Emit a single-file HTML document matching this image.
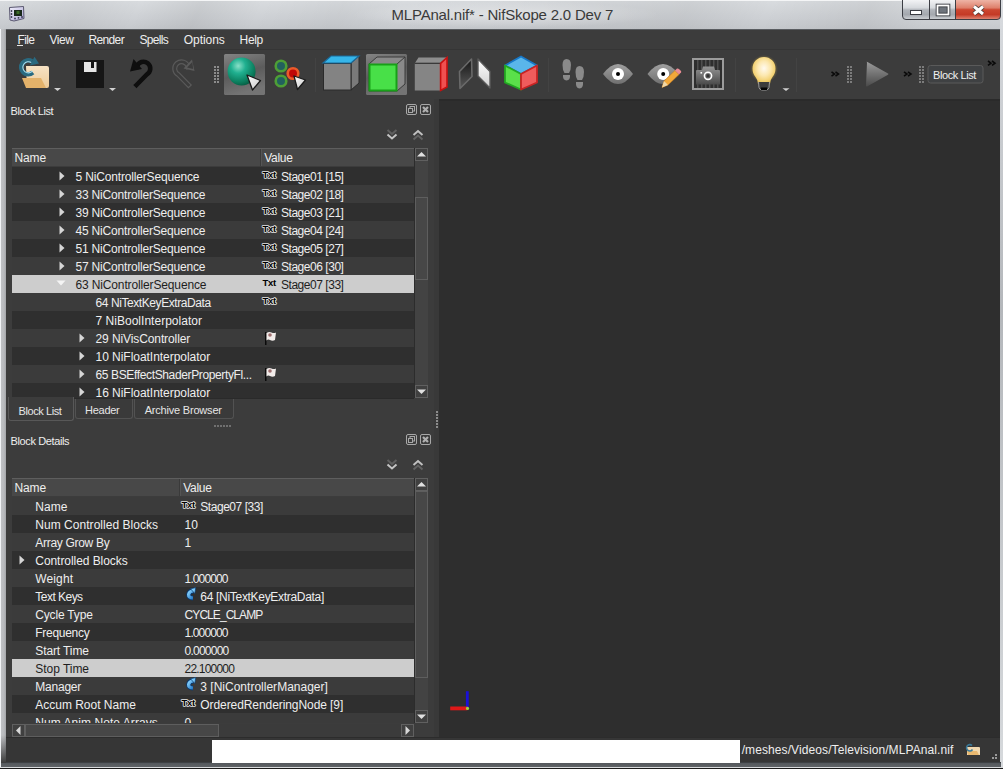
<!DOCTYPE html>
<html><head><meta charset="utf-8"><style>
*{margin:0;padding:0;box-sizing:border-box}
html,body{width:1003px;height:769px;overflow:hidden}
body{position:relative;background:#a9adb2;font-family:"Liberation Sans",sans-serif;font-size:12px;color:#e8e8e8}
.a{position:absolute}
.t{position:absolute;white-space:nowrap}
svg{position:absolute;overflow:visible}
</style></head><body>
<div class="a" style="left:0px;top:0px;width:1003px;height:769px;background:linear-gradient(90deg,#f2f4f6 0,#f2f4f6 1px,transparent 1px)"></div>
<div class="a" style="left:1px;top:0px;width:6px;height:769px;background:linear-gradient(90deg,#bfc1c4 0,#b8babd 3px,#a2a4a7 5px,#6a6c6e 6px)"></div>
<div class="a" style="left:1px;top:735px;width:6px;height:28px;background:linear-gradient(rgba(60,60,60,0),rgba(60,60,60,1))"></div>
<div class="a" style="left:0px;top:0px;width:1003px;height:29px;background:linear-gradient(#f4f5f6 0,#f4f5f6 1px,#d8dbde 1px,#cfd2d6 55%,#c6c9cd)"></div>
<div class="a" style="left:1000px;top:0px;width:3px;height:769px;background:linear-gradient(#d9dce0,#b4b7bb 40%,#d6d9dc)"></div>
<div class="a" style="left:0px;top:1px;width:1003px;height:28px;background:linear-gradient(115deg,rgba(0,0,0,0) 0,rgba(0,0,0,.04) 8%,rgba(0,0,0,0) 14%,rgba(0,0,0,.06) 20%,rgba(0,0,0,0) 26%,rgba(0,0,0,.03) 34%,rgba(0,0,0,0) 40%,rgba(0,0,0,.05) 68%,rgba(0,0,0,0) 76%,rgba(0,0,0,.05) 86%,rgba(0,0,0,0) 92%)"></div>
<div class="a" style="left:350px;top:1px;width:310px;height:27px;background:radial-gradient(closest-side,rgba(255,255,255,.4),rgba(255,255,255,0))"></div>
<div class="t" style="left:391.50px;top:7.30px;font-size:15px;line-height:15px;letter-spacing:-0.200px;color:#3a3a3a;">MLPAnal.nif* - NifSkope 2.0 Dev 7</div>
<svg style="left:8px;top:5px" width="20" height="20"><defs><linearGradient id="ic" x1="0" y1="0" x2="1" y2="1"><stop offset="0" stop-color="#f4f2ff"/><stop offset="1" stop-color="#a8a4d0"/></linearGradient></defs>
<path d="M1.5 2.5 L15.5 1.5 L16 13.5 L6 16 L2 15Z" fill="url(#ic)" stroke="#5a5870" stroke-width="1"/>
<rect x="6" y="5" width="8" height="6" fill="#1a2a1a"/><rect x="8.5" y="6" width="3" height="3" fill="#3a6a2a"/>
<g fill="#3a3850"><circle cx="3.5" cy="6" r="0.9"/><circle cx="3.5" cy="9" r="0.9"/><circle cx="3.5" cy="12" r="0.9"/><circle cx="7" cy="13.5" r="0.9"/><circle cx="10.5" cy="12.8" r="0.9"/><circle cx="14" cy="12" r="0.9"/></g></svg>
<svg style="left:902px;top:0" width="99" height="21"><defs>
<linearGradient id="cb" x1="0" y1="0" x2="0" y2="1"><stop offset="0" stop-color="#f2f3f5"/><stop offset="0.4" stop-color="#d6d9dd"/><stop offset="0.5" stop-color="#b2b6bc"/><stop offset="0.75" stop-color="#a4a8ae"/><stop offset="1" stop-color="#cfd2d6"/></linearGradient>
<linearGradient id="cr" x1="0" y1="0" x2="0" y2="1"><stop offset="0" stop-color="#eeb4a6"/><stop offset="0.4" stop-color="#de806c"/><stop offset="0.5" stop-color="#cc4630"/><stop offset="0.75" stop-color="#c43a26"/><stop offset="1" stop-color="#e28a78"/></linearGradient></defs>
<path d="M0.5 0 L0.5 16 Q0.5 19.5 4 19.5 L27.5 19.5 L27.5 0Z" fill="url(#cb)"/>
<rect x="27.5" y="0" width="26" height="19.5" fill="url(#cb)"/>
<path d="M53.5 0 L53.5 19.5 L95 19.5 Q98.5 19.5 98.5 16 L98.5 0Z" fill="url(#cr)"/>
<path d="M0.5 0 L0.5 16 Q0.5 19.5 4 19.5 L95 19.5 Q98.5 19.5 98.5 16 L98.5 0" fill="none" stroke="#3c3e44" stroke-width="1"/>
<path d="M27.5 0 L27.5 19.5 M53.5 0 L53.5 19.5" stroke="#3c3e44" stroke-width="1"/>
<rect x="8.5" y="10.5" width="11" height="4" fill="#fff" stroke="#3a3c42" stroke-width="1"/>
<rect x="35.5" y="5.5" width="11" height="9" fill="#6e747c" stroke="#3a3c42" stroke-width="3.6"/>
<rect x="35.5" y="5.5" width="11" height="9" fill="none" stroke="#fff" stroke-width="1.8"/>
<path d="M72 6.5 L81 14 M81 6.5 L72 14" stroke="#4a3a38" stroke-width="4.8"/>
<path d="M72 6.5 L81 14 M81 6.5 L72 14" stroke="#fff" stroke-width="3"/>
</svg>
<div class="a" style="left:6px;top:29px;width:994px;height:734px;background:#3c3c3c"></div>
<div class="a" style="left:6px;top:29px;width:994px;height:1px;background:#5a5d61"></div>
<div class="a" style="left:6px;top:762px;width:995px;height:1px;background:#3e4144"></div>
<div class="a" style="left:1px;top:763px;width:1000px;height:4px;background:linear-gradient(#55595d,#5f6367)"></div>
<div class="a" style="left:0px;top:767px;width:1003px;height:1px;background:#d8dadc"></div>
<div class="a" style="left:0px;top:768px;width:1003px;height:1px;background:#1c1c1c"></div>
<div class="t" style="left:17.50px;top:33.64px;font-size:12px;line-height:12px;letter-spacing:-0.633px;color:#eeeeee;">File</div>
<div class="t" style="left:49.50px;top:33.64px;font-size:12px;line-height:12px;letter-spacing:-0.500px;color:#eeeeee;">View</div>
<div class="t" style="left:88.40px;top:33.64px;font-size:12px;line-height:12px;letter-spacing:-0.620px;color:#eeeeee;">Render</div>
<div class="t" style="left:139.50px;top:33.64px;font-size:12px;line-height:12px;letter-spacing:-0.680px;color:#eeeeee;">Spells</div>
<div class="t" style="left:183.70px;top:33.64px;font-size:12px;line-height:12px;letter-spacing:-0.033px;color:#eeeeee;">Options</div>
<div class="t" style="left:239.60px;top:33.64px;font-size:12px;line-height:12px;letter-spacing:-0.333px;color:#eeeeee;">Help</div>
<div class="a" style="left:17px;top:45px;width:6px;height:1px;background:#e6e6e6"></div>
<div class="a" style="left:6px;top:49px;width:994px;height:1px;background:#353535"></div>
<div class="a" style="left:434px;top:99px;width:5px;height:638px;background:#393939"></div>
<div class="a" style="left:439px;top:99px;width:561px;height:638px;background:#2e2e2e"></div>
<div class="a" style="left:439px;top:99px;width:561px;height:2px;background:#2a2a2a"></div>
<svg style="left:449px;top:689px" width="24" height="24"><path d="M18.3 2.2 L18.3 19" stroke="#1a10d8" stroke-width="2.8"/><path d="M1.2 19.4 L18.3 19.4" stroke="#e01818" stroke-width="3.8"/><circle cx="18.5" cy="19.4" r="1.6" fill="#a0d040"/></svg>
<div class="a" style="left:6px;top:737px;width:994px;height:25px;background:#363636"></div>
<div class="a" style="left:6px;top:737px;width:994px;height:1px;background:#2c2c2c"></div>
<div class="a" style="left:212px;top:740px;width:528px;height:23px;background:#ffffff"></div>
<svg style="left:964px;top:741px" width="18" height="16"><path d="M3 6 L15 6 Q16 6 16 7 L16 14 L3 14Z" fill="#f0d8b0"/><path d="M3 10 L13 10 L15 14 L4 14Z" fill="#e8b870"/><path d="M8 4.5 A3.2 3.2 0 1 0 8.5 8.5" fill="none" stroke="#3a7a9a" stroke-width="1.6"/></svg>
<svg style="left:989px;top:754px" width="10" height="9"><g fill="#9a9a9a"><rect x="6" y="0" width="2" height="2"/><rect x="3" y="3" width="2" height="2"/><rect x="6" y="3" width="2" height="2"/></g></svg>
<div class="t" style="left:741.70px;top:744.24px;font-size:12px;line-height:12px;letter-spacing:0.092px;color:#eeeeee;">/meshes/Videos/Television/MLPAnal.nif</div>
<svg style="left:0;top:0" width="1003" height="100" viewBox="0 0 1003 100">
<defs>
<radialGradient id="sph" cx="0.38" cy="0.3" r="0.75"><stop offset="0" stop-color="#8ae0c8"/><stop offset="0.35" stop-color="#20b090"/><stop offset="0.8" stop-color="#0a7a5a"/><stop offset="1" stop-color="#06583f"/></radialGradient>
<linearGradient id="press" x1="0" y1="0" x2="0.3" y2="1"><stop offset="0" stop-color="#848484"/><stop offset="0.55" stop-color="#5c5c5c"/><stop offset="1" stop-color="#747474"/></linearGradient>
<linearGradient id="wtri" x1="0" y1="0" x2="1" y2="1"><stop offset="0" stop-color="#ffffff"/><stop offset="1" stop-color="#c8c8c8"/></linearGradient>
<linearGradient id="darkpl" x1="0" y1="0" x2="0" y2="1"><stop offset="0" stop-color="#151515"/><stop offset="1" stop-color="#5a5a5a"/></linearGradient>
<linearGradient id="whpl" x1="0" y1="0" x2="0" y2="1"><stop offset="0" stop-color="#ffffff"/><stop offset="1" stop-color="#d0d0d0"/></linearGradient>
<linearGradient id="eyeg" x1="0" y1="0" x2="0" y2="1"><stop offset="0" stop-color="#a0a0a0"/><stop offset="1" stop-color="#707070"/></linearGradient>
<linearGradient id="cam" x1="0" y1="0" x2="0" y2="1"><stop offset="0" stop-color="#959595"/><stop offset="1" stop-color="#4a4a4a"/></linearGradient>
<radialGradient id="bulb" cx="0.5" cy="0.42" r="0.6"><stop offset="0" stop-color="#fffaf0"/><stop offset="0.45" stop-color="#fce8b0"/><stop offset="0.8" stop-color="#f2d070"/><stop offset="1" stop-color="#e0b84a"/></radialGradient>
<radialGradient id="glow" cx="0.5" cy="0.5" r="0.5"><stop offset="0.6" stop-color="#e8c040" stop-opacity="0.5"/><stop offset="1" stop-color="#e8c040" stop-opacity="0"/></radialGradient>
<linearGradient id="play" x1="0" y1="0" x2="0" y2="1"><stop offset="0" stop-color="#9a9a9a"/><stop offset="1" stop-color="#4a4a4a"/></linearGradient>
<linearGradient id="folderb" x1="0" y1="0" x2="0" y2="1"><stop offset="0" stop-color="#f6e2c4"/><stop offset="1" stop-color="#eecb98"/></linearGradient>
</defs>
<path d="M26 66 L47 66 Q49 66 49 68 L49 86 Q49 88 47 88 L27 88Z" fill="url(#folderb)"/>
<path d="M22 78 L41 78 L46 88 L26 88Z" fill="#e4b26a"/>
<path d="M32.8 72.6 A7 7 0 1 1 32 61.4" fill="none" stroke="#2a6a80" stroke-width="4.6"/>
<path d="M32.5 71.2 A5.6 5.6 0 1 1 31.5 62.6" fill="none" stroke="#a8dcec" stroke-width="1.1"/>
<path d="M34.5 56.8 L39 63.5 L29.8 65.5Z" fill="#2a6a80"/>
<path d="M54 88 L61 88 L57.5 91Z" fill="#d0d0d0"/>
<rect x="76" y="60" width="28" height="28" fill="#161616"/>
<rect x="84" y="62" width="12.5" height="10" fill="#e6e6e6"/>
<rect x="91" y="62" width="3" height="6" fill="#161616"/>
<path d="M109 88 L116 88 L112.5 91Z" fill="#d0d0d0"/>
<path d="M136.5 85 L146.8 74.5 A6.8 6.8 0 1 0 137 66.5" fill="none" stroke="#0e0e0e" stroke-width="4.6" stroke-linecap="square"/>
<path d="M133.5 59 L130 71.5 L142 69Z" fill="#0e0e0e"/>
<path d="M188.5 85 L178.2 74.5 A6.8 6.8 0 1 1 188 66.5" fill="none" stroke="#5a5a5a" stroke-width="5" stroke-linecap="square"/>
<path d="M188.5 85 L178.2 74.5 A6.8 6.8 0 1 1 188 66.5" fill="none" stroke="#3c3c3c" stroke-width="2.6" stroke-linecap="square"/>
<path d="M192 59.5 L194.5 71 L183.5 68.5Z" fill="#5a5a5a"/><path d="M192.3 62 L193.2 69 L187 67.5Z" fill="#3c3c3c"/>
<rect x="214" y="66" width="2" height="2" fill="#8c8c8c"/>
<rect x="217" y="66" width="2" height="2" fill="#8c8c8c"/>
<rect x="214" y="69" width="2" height="2" fill="#8c8c8c"/>
<rect x="217" y="69" width="2" height="2" fill="#8c8c8c"/>
<rect x="214" y="72" width="2" height="2" fill="#8c8c8c"/>
<rect x="217" y="72" width="2" height="2" fill="#8c8c8c"/>
<rect x="214" y="75" width="2" height="2" fill="#8c8c8c"/>
<rect x="217" y="75" width="2" height="2" fill="#8c8c8c"/>
<rect x="214" y="78" width="2" height="2" fill="#8c8c8c"/>
<rect x="217" y="78" width="2" height="2" fill="#8c8c8c"/>
<rect x="214" y="81" width="2" height="2" fill="#8c8c8c"/>
<rect x="217" y="81" width="2" height="2" fill="#8c8c8c"/>
<rect x="224" y="54" width="41" height="41" rx="1.5" fill="url(#press)"/>
<circle cx="241.6" cy="71.5" r="14" fill="url(#sph)"/>
<path d="M247 75 L260.5 80.5 L252.5 90Z" fill="url(#wtri)" stroke="#1a1a1a" stroke-width="1.3" stroke-linejoin="round"/>
<circle cx="281" cy="66" r="5.3" fill="#22605e" stroke="#4e9e36" stroke-width="2.6"/>
<circle cx="281" cy="81" r="5.3" fill="#22605e" stroke="#4e9e36" stroke-width="2.6"/>
<circle cx="293" cy="73.5" r="5.3" fill="#c00808" stroke="#ea5a2a" stroke-width="2.6"/>
<path d="M294 76 L305.5 80 L297.5 89.5Z" fill="url(#wtri)" stroke="#1a1a1a" stroke-width="1.3" stroke-linejoin="round"/>
<rect x="315" y="58" width="1" height="34" fill="#434343"/>
<path d="M351 63 L359 56 L359 83 L351 90Z" fill="#7a7a7a" stroke="#2a2a2a" stroke-width="1"/>
<rect x="323.5" y="63.5" width="27.5" height="26.5" fill="#838383" stroke="#2a2a2a" stroke-width="1"/>
<path d="M323 63 L331 56 L359 56 L351 63Z" fill="#36b6ea" stroke="#1a6a9a" stroke-width="1.2"/>
<rect x="366" y="54" width="41" height="41" rx="1.5" fill="url(#press)"/>
<path d="M369 64 L377 57 L405 57 L405 84 L397 91 L369 91Z" fill="#8a8a8a" stroke="#3a3a3a" stroke-width="1"/>
<path d="M397 64 L405 57" stroke="#3a3a3a" stroke-width="1"/>
<rect x="369.5" y="64.5" width="27" height="26" fill="#48e048" stroke="#18a018" stroke-width="2"/>
<path d="M414.8 63.3 L418.5 57.5 L447 57.5 L440.6 63.3Z" fill="#8e8e8e"/>
<rect x="414.8" y="63.3" width="25.8" height="27.2" fill="#858585"/>
<path d="M414.8 63.3 L440.6 63.3" stroke="#333" stroke-width="1.2"/>
<path d="M440.6 63.3 L447 57.5 L447 87 L440.6 90.5Z" fill="#f05050" stroke="#c81010" stroke-width="1.6"/>
<path d="M459.5 71.5 L471.5 59 L472 76.5 L460 88.5Z" fill="url(#darkpl)" stroke="#6a6a6a" stroke-width="1.6" stroke-linejoin="round"/>
<path d="M478 59 L490 71.5 L490 88 L478 76Z" fill="url(#whpl)" stroke="#5a5a5a" stroke-width="1.4" stroke-linejoin="round"/>
<path d="M521 56.5 L537 65.5 L521 74 L505 65.5Z" fill="#5ab6ea" stroke="#1878c8" stroke-width="1.8" stroke-linejoin="round"/>
<path d="M505 65.5 L521 74 L521 89.5 L505 82.5Z" fill="#5ae04a" stroke="#22a822" stroke-width="1.8" stroke-linejoin="round"/>
<path d="M537 65.5 L521 74 L521 89.5 L537 82.5Z" fill="#f05c5c" stroke="#c82424" stroke-width="1.8" stroke-linejoin="round"/>
<rect x="548" y="58" width="1" height="34" fill="#434343"/>
<g fill="#8a8a8a"><path d="M566.5 59 Q571 59 571 65 Q571 70 569 73 L564.5 73 Q562.5 70 562.5 65 Q562.5 59 566.5 59Z"/><path d="M563 75 L570 75 Q570.5 80 566.5 80.5 Q562.5 80 563 75Z"/><path d="M579.5 66 Q584 66 584 72 Q584 77 582 80 L577.5 80 Q575.5 77 575.5 72 Q575.5 66 579.5 66Z"/><path d="M576 82 L583 82 Q583.5 88 579.5 88.5 Q575.5 88 576 82Z"/></g>
<path d="M603 74 Q618 54 633 74 Q618 94 603 74Z" fill="url(#eyeg)"/>
<circle cx="618" cy="74" r="6" fill="#ffffff"/><circle cx="618" cy="74" r="2" fill="#000"/>
<path d="M647.5 74 Q663 54 678.5 74 Q663 94 647.5 74Z" fill="url(#eyeg)"/>
<circle cx="663.2" cy="74" r="6" fill="#ffffff"/><circle cx="663.2" cy="74" r="2" fill="#000"/>
<path d="M662 87.5 L664 81 L675 70.5 L679 74.5 L668 85Z" fill="#f2a83a" stroke="#c87a20" stroke-width="0.6"/>
<path d="M675 70.5 L677 68.5 Q678 68 679.5 69.5 L681 71 Q681.5 72 681 72.5 L679 74.5Z" fill="#ec8c94"/>
<path d="M662 87.5 L664 81 L668 85Z" fill="#f0d8a8"/>
<rect x="693" y="59" width="30" height="30" fill="#2e2e2e" stroke="#9c9c9c" stroke-width="2"/>
<rect x="697" y="60" width="1.5" height="28" fill="#4e4e4e"/>
<rect x="701" y="60" width="1.5" height="28" fill="#4e4e4e"/>
<rect x="705" y="60" width="1.5" height="28" fill="#4e4e4e"/>
<rect x="709" y="60" width="1.5" height="28" fill="#4e4e4e"/>
<rect x="713" y="60" width="1.5" height="28" fill="#4e4e4e"/>
<rect x="717" y="60" width="1.5" height="28" fill="#4e4e4e"/>
<path d="M696 71 Q696 70 697 70 L702 70 L703 66.5 L714 66.5 L715 70 L719 70 Q720 70 720 71 L720 84.5 L696 84.5Z" fill="url(#cam)"/>
<circle cx="708" cy="75.8" r="3.6" fill="none" stroke="#fff" stroke-width="1.6"/><rect x="706.5" y="74.3" width="3" height="3" fill="#333"/>
<rect x="700.5" y="72" width="1.6" height="1.6" fill="#fff"/>
<rect x="735" y="58" width="1" height="34" fill="#434343"/>
<circle cx="764" cy="69" r="14" fill="url(#glow)"/>
<path d="M758 84 Q758 80 755.5 77 Q752.5 73.5 752.5 68.5 A11.5 11.5 0 0 1 775.5 68.5 Q775.5 73.5 772.5 77 Q770 80 770 84Z" fill="url(#bulb)"/>
<path d="M758.5 82 L759 87.5 Q759.5 90 762 90 L766 90 Q768.5 90 769 87.5 L769.5 82" fill="#3c3c3c" stroke="#9a9a9a" stroke-width="1"/>
<rect x="761" y="87.5" width="6" height="2.5" fill="#050505"/>
<path d="M782.5 88.3 L789.5 88.3 L786 91Z" fill="#d0d0d0"/>
<rect x="796" y="58" width="1" height="34" fill="#434343"/>
<path d="M831.5 71.8 L834.5 74.0 L831.5 76.2 M835.5 71.8 L838.5 74.0 L835.5 76.2" fill="none" stroke="#0a0a0a" stroke-width="1.6"/>
<rect x="847" y="66" width="2" height="2" fill="#7c7c7c"/>
<rect x="850" y="66" width="2" height="2" fill="#7c7c7c"/>
<rect x="847" y="69" width="2" height="2" fill="#7c7c7c"/>
<rect x="850" y="69" width="2" height="2" fill="#7c7c7c"/>
<rect x="847" y="72" width="2" height="2" fill="#7c7c7c"/>
<rect x="850" y="72" width="2" height="2" fill="#7c7c7c"/>
<rect x="847" y="75" width="2" height="2" fill="#7c7c7c"/>
<rect x="850" y="75" width="2" height="2" fill="#7c7c7c"/>
<rect x="847" y="78" width="2" height="2" fill="#7c7c7c"/>
<rect x="850" y="78" width="2" height="2" fill="#7c7c7c"/>
<rect x="847" y="81" width="2" height="2" fill="#7c7c7c"/>
<rect x="850" y="81" width="2" height="2" fill="#7c7c7c"/>
<path d="M867 62.5 Q866 61.5 867.5 62 L888 73.5 Q889 74 888 74.8 L867.5 86.3 Q866 87 866 85.5Z" fill="url(#play)"/>
<path d="M904 71.8 L907 74.0 L904 76.2 M908 71.8 L911 74.0 L908 76.2" fill="none" stroke="#0a0a0a" stroke-width="1.6"/>
<rect x="919" y="66" width="2" height="2" fill="#7c7c7c"/>
<rect x="922" y="66" width="2" height="2" fill="#7c7c7c"/>
<rect x="919" y="69" width="2" height="2" fill="#7c7c7c"/>
<rect x="922" y="69" width="2" height="2" fill="#7c7c7c"/>
<rect x="919" y="72" width="2" height="2" fill="#7c7c7c"/>
<rect x="922" y="72" width="2" height="2" fill="#7c7c7c"/>
<rect x="919" y="75" width="2" height="2" fill="#7c7c7c"/>
<rect x="922" y="75" width="2" height="2" fill="#7c7c7c"/>
<rect x="919" y="78" width="2" height="2" fill="#7c7c7c"/>
<rect x="922" y="78" width="2" height="2" fill="#7c7c7c"/>
<rect x="919" y="81" width="2" height="2" fill="#7c7c7c"/>
<rect x="922" y="81" width="2" height="2" fill="#7c7c7c"/>
<rect x="928" y="65.5" width="55" height="17.5" rx="2.5" fill="#3f4143" stroke="#5a5a5a" stroke-width="1"/>
<path d="M988 61 L991 63.2 L988 65.4 M992 61 L995 63.2 L992 65.4" fill="none" stroke="#0a0a0a" stroke-width="1.6"/>
</svg>
<div class="t" style="left:933.00px;top:69.59px;font-size:11px;line-height:11px;letter-spacing:-0.411px;color:#f0f0f0;">Block List</div>
<div class="t" style="left:10.60px;top:105.59px;font-size:11px;line-height:11px;letter-spacing:-0.456px;color:#eeeeee;">Block List</div>
<div class="a" style="left:12px;top:148px;width:402px;height:18px;background:#484848"></div>
<div class="a" style="left:12px;top:148px;width:402px;height:1px;background:#5e5e5e"></div>
<div class="a" style="left:260px;top:149px;width:1px;height:17px;background:#3a3a3a"></div>
<div class="a" style="left:261px;top:149px;width:1px;height:17px;background:#555"></div>
<div class="t" style="left:14.50px;top:151.64px;font-size:12px;line-height:12px;letter-spacing:-0.133px;color:#eeeeee;">Name</div>
<div class="t" style="left:264.20px;top:151.64px;font-size:12px;line-height:12px;letter-spacing:-0.275px;color:#eeeeee;">Value</div>
<div class="a" style="left:12px;top:166.5px;width:402px;height:18.05px;background:#2f2f2f"></div>
<div class="a" style="left:12px;top:184.55px;width:402px;height:18.05px;background:#3b3b3b"></div>
<div class="a" style="left:12px;top:202.6px;width:402px;height:18.05px;background:#2f2f2f"></div>
<div class="a" style="left:12px;top:220.65px;width:402px;height:18.05px;background:#3b3b3b"></div>
<div class="a" style="left:12px;top:238.7px;width:402px;height:18.05px;background:#2f2f2f"></div>
<div class="a" style="left:12px;top:256.75px;width:402px;height:18.05px;background:#3b3b3b"></div>
<div class="a" style="left:12px;top:274.8px;width:402px;height:18.05px;background:#cdcdcd"></div>
<div class="a" style="left:12px;top:292.85px;width:402px;height:18.05px;background:#3b3b3b"></div>
<div class="a" style="left:12px;top:310.9px;width:402px;height:18.05px;background:#2f2f2f"></div>
<div class="a" style="left:12px;top:328.95px;width:402px;height:18.05px;background:#3b3b3b"></div>
<div class="a" style="left:12px;top:347.0px;width:402px;height:18.05px;background:#2f2f2f"></div>
<div class="a" style="left:12px;top:365.05px;width:402px;height:18.05px;background:#3b3b3b"></div>
<div class="a" style="left:12px;top:383.1px;width:402px;height:14.9px;background:#2f2f2f"></div>
<div class="a" style="left:12px;top:166px;width:402px;height:232px;overflow:hidden">
<div class="t" style="left:63.50px;top:5.44px;font-size:12px;line-height:12px;letter-spacing:-0.162px;color:#eeeeee;">5 NiControllerSequence</div>
<svg style="left:47.0px;top:4.6px" width="6" height="10"><path d="M0.5 0.5 L5.5 5 L0.5 9.5Z" fill="#d6d6d6"/></svg>
<svg style="left:249.60000000000002px;top:4px" width="16" height="10"><text x="0.5" y="8" font-family="Liberation Sans" font-weight="bold" font-size="9.5" letter-spacing="-0.3" fill="#000" stroke="#e8e8e8" stroke-width="1.6" paint-order="stroke" stroke-linejoin="round">Txt</text></svg>
<div class="t" style="left:269.00px;top:5.44px;font-size:12px;line-height:12px;letter-spacing:-0.464px;color:#eeeeee;">Stage01 [15]</div>
<div class="t" style="left:63.50px;top:23.44px;font-size:12px;line-height:12px;letter-spacing:-0.186px;color:#eeeeee;">33 NiControllerSequence</div>
<svg style="left:47.0px;top:22.6px" width="6" height="10"><path d="M0.5 0.5 L5.5 5 L0.5 9.5Z" fill="#d6d6d6"/></svg>
<svg style="left:249.60000000000002px;top:22px" width="16" height="10"><text x="0.5" y="8" font-family="Liberation Sans" font-weight="bold" font-size="9.5" letter-spacing="-0.3" fill="#000" stroke="#e8e8e8" stroke-width="1.6" paint-order="stroke" stroke-linejoin="round">Txt</text></svg>
<div class="t" style="left:269.00px;top:23.44px;font-size:12px;line-height:12px;letter-spacing:-0.464px;color:#eeeeee;">Stage02 [18]</div>
<div class="t" style="left:63.50px;top:41.44px;font-size:12px;line-height:12px;letter-spacing:-0.186px;color:#eeeeee;">39 NiControllerSequence</div>
<svg style="left:47.0px;top:40.6px" width="6" height="10"><path d="M0.5 0.5 L5.5 5 L0.5 9.5Z" fill="#d6d6d6"/></svg>
<svg style="left:249.60000000000002px;top:40px" width="16" height="10"><text x="0.5" y="8" font-family="Liberation Sans" font-weight="bold" font-size="9.5" letter-spacing="-0.3" fill="#000" stroke="#e8e8e8" stroke-width="1.6" paint-order="stroke" stroke-linejoin="round">Txt</text></svg>
<div class="t" style="left:269.00px;top:41.44px;font-size:12px;line-height:12px;letter-spacing:-0.464px;color:#eeeeee;">Stage03 [21]</div>
<div class="t" style="left:63.50px;top:59.44px;font-size:12px;line-height:12px;letter-spacing:-0.186px;color:#eeeeee;">45 NiControllerSequence</div>
<svg style="left:47.0px;top:58.6px" width="6" height="10"><path d="M0.5 0.5 L5.5 5 L0.5 9.5Z" fill="#d6d6d6"/></svg>
<svg style="left:249.60000000000002px;top:58px" width="16" height="10"><text x="0.5" y="8" font-family="Liberation Sans" font-weight="bold" font-size="9.5" letter-spacing="-0.3" fill="#000" stroke="#e8e8e8" stroke-width="1.6" paint-order="stroke" stroke-linejoin="round">Txt</text></svg>
<div class="t" style="left:269.00px;top:59.44px;font-size:12px;line-height:12px;letter-spacing:-0.464px;color:#eeeeee;">Stage04 [24]</div>
<div class="t" style="left:63.50px;top:77.44px;font-size:12px;line-height:12px;letter-spacing:-0.186px;color:#eeeeee;">51 NiControllerSequence</div>
<svg style="left:47.0px;top:76.6px" width="6" height="10"><path d="M0.5 0.5 L5.5 5 L0.5 9.5Z" fill="#d6d6d6"/></svg>
<svg style="left:249.60000000000002px;top:76px" width="16" height="10"><text x="0.5" y="8" font-family="Liberation Sans" font-weight="bold" font-size="9.5" letter-spacing="-0.3" fill="#000" stroke="#e8e8e8" stroke-width="1.6" paint-order="stroke" stroke-linejoin="round">Txt</text></svg>
<div class="t" style="left:269.00px;top:77.44px;font-size:12px;line-height:12px;letter-spacing:-0.464px;color:#eeeeee;">Stage05 [27]</div>
<div class="t" style="left:63.50px;top:95.44px;font-size:12px;line-height:12px;letter-spacing:-0.186px;color:#eeeeee;">57 NiControllerSequence</div>
<svg style="left:47.0px;top:94.6px" width="6" height="10"><path d="M0.5 0.5 L5.5 5 L0.5 9.5Z" fill="#d6d6d6"/></svg>
<svg style="left:249.60000000000002px;top:94px" width="16" height="10"><text x="0.5" y="8" font-family="Liberation Sans" font-weight="bold" font-size="9.5" letter-spacing="-0.3" fill="#000" stroke="#e8e8e8" stroke-width="1.6" paint-order="stroke" stroke-linejoin="round">Txt</text></svg>
<div class="t" style="left:269.00px;top:95.44px;font-size:12px;line-height:12px;letter-spacing:-0.464px;color:#eeeeee;">Stage06 [30]</div>
<div class="t" style="left:63.50px;top:113.44px;font-size:12px;line-height:12px;letter-spacing:-0.141px;color:#1e1e1e;">63 NiControllerSequence</div>
<svg style="left:43.8px;top:114px" width="10" height="6"><path d="M0.5 0.5 L9.5 0.5 L5 5.5Z" fill="#f4f4f4"/></svg>
<svg style="left:249.60000000000002px;top:112px" width="16" height="10"><text x="0.5" y="8" font-family="Liberation Sans" font-weight="bold" font-size="9.5" letter-spacing="-0.3" fill="#000">Txt</text></svg>
<div class="t" style="left:269.00px;top:113.44px;font-size:12px;line-height:12px;letter-spacing:-0.464px;color:#1e1e1e;">Stage07 [33]</div>
<div class="t" style="left:83.50px;top:131.44px;font-size:12px;line-height:12px;letter-spacing:-0.420px;color:#eeeeee;">64 NiTextKeyExtraData</div>
<svg style="left:249.60000000000002px;top:130px" width="16" height="10"><text x="0.5" y="8" font-family="Liberation Sans" font-weight="bold" font-size="9.5" letter-spacing="-0.3" fill="#000" stroke="#e8e8e8" stroke-width="1.6" paint-order="stroke" stroke-linejoin="round">Txt</text></svg>
<div class="t" style="left:83.50px;top:149.44px;font-size:12px;line-height:12px;letter-spacing:0.021px;color:#eeeeee;">7 NiBoolInterpolator</div>
<div class="t" style="left:83.50px;top:167.44px;font-size:12px;line-height:12px;letter-spacing:-0.100px;color:#eeeeee;">29 NiVisController</div>
<svg style="left:67.0px;top:166.6px" width="6" height="10"><path d="M0.5 0.5 L5.5 5 L0.5 9.5Z" fill="#d6d6d6"/></svg>
<svg style="left:252.10000000000002px;top:164.5px" width="14" height="15"><path d="M1 1 L2.5 1 L2.5 14 L1 14Z" fill="#0a0a0a"/><path d="M2.5 2 Q5 0.5 7.5 1.5 Q10 2.5 12 1.5 L11 9 Q8.5 10.5 6 9 Q4 8 2.5 9.5Z" fill="#f2ecea"/><circle cx="6" cy="4" r="1.8" fill="#8a5050" opacity="0.8"/></svg>
<div class="t" style="left:83.50px;top:185.44px;font-size:12px;line-height:12px;letter-spacing:-0.033px;color:#eeeeee;">10 NiFloatInterpolator</div>
<svg style="left:67.0px;top:184.6px" width="6" height="10"><path d="M0.5 0.5 L5.5 5 L0.5 9.5Z" fill="#d6d6d6"/></svg>
<div class="t" style="left:83.50px;top:203.44px;font-size:12px;line-height:12px;letter-spacing:-0.366px;color:#eeeeee;">65 BSEffectShaderPropertyFl...</div>
<svg style="left:67.0px;top:202.6px" width="6" height="10"><path d="M0.5 0.5 L5.5 5 L0.5 9.5Z" fill="#d6d6d6"/></svg>
<svg style="left:252.10000000000002px;top:200.5px" width="14" height="15"><path d="M1 1 L2.5 1 L2.5 14 L1 14Z" fill="#0a0a0a"/><path d="M2.5 2 Q5 0.5 7.5 1.5 Q10 2.5 12 1.5 L11 9 Q8.5 10.5 6 9 Q4 8 2.5 9.5Z" fill="#f2ecea"/><circle cx="6" cy="4" r="1.8" fill="#8a5050" opacity="0.8"/></svg>
<div class="t" style="left:83.50px;top:221.44px;font-size:12px;line-height:12px;letter-spacing:-0.033px;color:#eeeeee;">16 NiFloatInterpolator</div>
<svg style="left:67.0px;top:220.6px" width="6" height="10"><path d="M0.5 0.5 L5.5 5 L0.5 9.5Z" fill="#d6d6d6"/></svg>
</div>
<div class="a" style="left:414px;top:148px;width:1px;height:250px;background:#2c2c2c"></div>
<div class="a" style="left:415px;top:148px;width:13px;height:250px;background:#434343"></div>
<div class="a" style="left:415px;top:197px;width:13px;height:83px;background:#474747;border:1px solid #5e5e5e"></div>
<div class="a" style="left:415px;top:148px;width:13px;height:13px;background:#404040;border:1px solid #606060"></div>
<svg style="left:417px;top:152px" width="9" height="5"><path d="M0 4.5 L4.5 0 L9 4.5Z" fill="#e0e0e0"/></svg>
<div class="a" style="left:415px;top:385px;width:13px;height:13px;background:#404040;border:1px solid #606060"></div>
<svg style="left:417px;top:389px" width="9" height="5"><path d="M0 0.5 L4.5 5 L9 0.5Z" fill="#e0e0e0"/></svg>
<div class="a" style="left:12px;top:398px;width:402px;height:1px;background:#2a2a2a"></div>
<div class="a" style="left:75px;top:399px;width:58px;height:20px;background:#3a3a3a;border:1px solid #525252;border-top:none;border-radius:0 0 3px 3px"></div>
<div class="t" style="left:85.00px;top:404.79px;font-size:11px;line-height:11px;letter-spacing:-0.260px;color:#e6e6e6;">Header</div>
<div class="a" style="left:134px;top:399px;width:100px;height:20px;background:#3a3a3a;border:1px solid #525252;border-top:none;border-radius:0 0 3px 3px"></div>
<div class="t" style="left:144.70px;top:404.79px;font-size:11px;line-height:11px;letter-spacing:-0.200px;color:#e6e6e6;">Archive Browser</div>
<div class="a" style="left:8px;top:397px;width:66px;height:24px;background:#3c3c3c;border:1px solid #585858;border-top:none;border-radius:0 0 3px 3px"></div>
<div class="t" style="left:18.60px;top:405.59px;font-size:11px;line-height:11px;letter-spacing:-0.433px;color:#e6e6e6;">Block List</div>
<div class="a" style="left:214px;top:425px;width:2px;height:2px;background:#707070"></div>
<div class="a" style="left:217px;top:425px;width:2px;height:2px;background:#707070"></div>
<div class="a" style="left:220px;top:425px;width:2px;height:2px;background:#707070"></div>
<div class="a" style="left:223px;top:425px;width:2px;height:2px;background:#707070"></div>
<div class="a" style="left:226px;top:425px;width:2px;height:2px;background:#707070"></div>
<div class="a" style="left:229px;top:425px;width:2px;height:2px;background:#707070"></div>
<div class="a" style="left:436px;top:411px;width:2px;height:2px;background:#8c8c8c"></div>
<div class="a" style="left:436px;top:414px;width:2px;height:2px;background:#8c8c8c"></div>
<div class="a" style="left:436px;top:417px;width:2px;height:2px;background:#8c8c8c"></div>
<div class="a" style="left:436px;top:420px;width:2px;height:2px;background:#8c8c8c"></div>
<div class="a" style="left:436px;top:423px;width:2px;height:2px;background:#8c8c8c"></div>
<div class="a" style="left:436px;top:426px;width:2px;height:2px;background:#8c8c8c"></div>
<svg style="left:406px;top:104px" width="11" height="11"><rect x="0.5" y="0.5" width="10" height="10" rx="1.5" fill="none" stroke="#a8a8a8"/><rect x="4" y="2.5" width="4.5" height="4.5" fill="none" stroke="#a8a8a8"/><rect x="2.5" y="4.5" width="4" height="4" fill="#3c3c3c" stroke="#a8a8a8"/></svg>
<svg style="left:420px;top:104px" width="11" height="11"><rect x="0.5" y="0.5" width="10" height="10" rx="1.5" fill="none" stroke="#a8a8a8"/><path d="M3 3 L8 8 M8 3 L3 8" stroke="#b0b0b0" stroke-width="2.2"/></svg>
<svg style="left:386px;top:129px" width="12" height="12"><path d="M1.5 1 L6 5 L10.5 1" fill="none" stroke="#5e5e5e" stroke-width="2"/><path d="M1.5 5.5 L6 9.5 L10.5 5.5" fill="none" stroke="#c4c4c4" stroke-width="2"/></svg>
<svg style="left:412px;top:129px" width="12" height="12"><path d="M1.5 6 L6 2 L10.5 6" fill="none" stroke="#c0c0c0" stroke-width="2"/><path d="M1.5 10.5 L6 6.5 L10.5 10.5" fill="none" stroke="#626262" stroke-width="2"/></svg>
<div class="t" style="left:10.60px;top:435.59px;font-size:11px;line-height:11px;letter-spacing:-0.383px;color:#eeeeee;">Block Details</div>
<div class="a" style="left:12px;top:478px;width:402px;height:18px;background:#484848"></div>
<div class="a" style="left:12px;top:478px;width:402px;height:1px;background:#5e5e5e"></div>
<div class="a" style="left:179px;top:479px;width:1px;height:17px;background:#3a3a3a"></div>
<div class="a" style="left:180px;top:479px;width:1px;height:17px;background:#555"></div>
<div class="t" style="left:14.50px;top:481.64px;font-size:12px;line-height:12px;letter-spacing:-0.133px;color:#eeeeee;">Name</div>
<div class="t" style="left:183.20px;top:481.64px;font-size:12px;line-height:12px;letter-spacing:-0.275px;color:#eeeeee;">Value</div>
<div class="a" style="left:12px;top:496.5px;width:402px;height:18.05px;background:#3b3b3b"></div>
<div class="a" style="left:12px;top:514.55px;width:402px;height:18.05px;background:#2f2f2f"></div>
<div class="a" style="left:12px;top:532.6px;width:402px;height:18.05px;background:#3b3b3b"></div>
<div class="a" style="left:12px;top:550.65px;width:402px;height:18.05px;background:#2f2f2f"></div>
<div class="a" style="left:12px;top:568.7px;width:402px;height:18.05px;background:#3b3b3b"></div>
<div class="a" style="left:12px;top:586.75px;width:402px;height:18.05px;background:#2f2f2f"></div>
<div class="a" style="left:12px;top:604.8px;width:402px;height:18.05px;background:#3b3b3b"></div>
<div class="a" style="left:12px;top:622.85px;width:402px;height:18.05px;background:#2f2f2f"></div>
<div class="a" style="left:12px;top:640.9px;width:402px;height:18.05px;background:#3b3b3b"></div>
<div class="a" style="left:12px;top:658.95px;width:402px;height:18.05px;background:#cdcdcd"></div>
<div class="a" style="left:12px;top:677.0px;width:402px;height:18.05px;background:#3b3b3b"></div>
<div class="a" style="left:12px;top:695.05px;width:402px;height:18.05px;background:#2f2f2f"></div>
<div class="a" style="left:12px;top:713.1px;width:402px;height:9.9px;background:#3b3b3b"></div>
<div class="a" style="left:12px;top:496px;width:402px;height:227px;overflow:hidden">
<div class="t" style="left:23.30px;top:5.44px;font-size:12px;line-height:12px;letter-spacing:0.033px;color:#eeeeee;">Name</div>
<svg style="left:169px;top:4px" width="16" height="10"><text x="0.5" y="8" font-family="Liberation Sans" font-weight="bold" font-size="9.5" letter-spacing="-0.3" fill="#000" stroke="#e8e8e8" stroke-width="1.6" paint-order="stroke" stroke-linejoin="round">Txt</text></svg>
<div class="t" style="left:188.30px;top:5.44px;font-size:12px;line-height:12px;letter-spacing:-0.464px;color:#eeeeee;">Stage07 [33]</div>
<div class="t" style="left:23.30px;top:23.44px;font-size:12px;line-height:12px;letter-spacing:0.035px;color:#eeeeee;">Num Controlled Blocks</div>
<div class="t" style="left:172.60px;top:23.44px;font-size:12px;line-height:12px;color:#eeeeee;">10</div>
<div class="t" style="left:23.30px;top:41.44px;font-size:12px;line-height:12px;letter-spacing:-0.300px;color:#eeeeee;">Array Grow By</div>
<div class="t" style="left:172.60px;top:41.44px;font-size:12px;line-height:12px;color:#eeeeee;">1</div>
<div class="t" style="left:23.30px;top:59.44px;font-size:12px;line-height:12px;letter-spacing:-0.062px;color:#eeeeee;">Controlled Blocks</div>
<svg style="left:6.8px;top:58.6px" width="6" height="10"><path d="M0.5 0.5 L5.5 5 L0.5 9.5Z" fill="#d6d6d6"/></svg>
<div class="t" style="left:23.30px;top:77.44px;font-size:12px;line-height:12px;letter-spacing:0.120px;color:#eeeeee;">Weight</div>
<div class="t" style="left:172.60px;top:77.44px;font-size:12px;line-height:12px;letter-spacing:-0.886px;color:#eeeeee;">1.000000</div>
<div class="t" style="left:23.30px;top:95.44px;font-size:12px;line-height:12px;letter-spacing:-0.525px;color:#eeeeee;">Text Keys</div>
<svg style="left:173.5px;top:91px" width="10" height="13"><defs><linearGradient id="lk3305" x1="0" y1="0" x2="1" y2="1"><stop offset="0" stop-color="#8ad4ff"/><stop offset="1" stop-color="#1e74c4"/></linearGradient></defs><path d="M7.5 4 Q3.2 4 2.6 7.5 Q2.4 10.8 7 11" fill="none" stroke="#0a3a70" stroke-width="4.8"/><path d="M7.5 4 Q3.2 4 2.6 7.5 Q2.4 10.8 7 11" fill="none" stroke="url(#lk3305)" stroke-width="3.2"/><path d="M4.5 1.8 L9.8 0.6 L8.8 6.5Z" fill="#7ac8f8" stroke="#0a3a70" stroke-width="0.7"/></svg>
<div class="t" style="left:188.30px;top:95.44px;font-size:12px;line-height:12px;letter-spacing:-0.305px;color:#eeeeee;">64 [NiTextKeyExtraData]</div>
<div class="t" style="left:23.30px;top:113.44px;font-size:12px;line-height:12px;letter-spacing:-0.178px;color:#eeeeee;">Cycle Type</div>
<div class="t" style="left:172.60px;top:113.44px;font-size:12px;line-height:12px;letter-spacing:-0.940px;color:#eeeeee;">CYCLE_CLAMP</div>
<div class="t" style="left:23.30px;top:131.44px;font-size:12px;line-height:12px;letter-spacing:-0.288px;color:#eeeeee;">Frequency</div>
<div class="t" style="left:172.60px;top:131.44px;font-size:12px;line-height:12px;letter-spacing:-0.886px;color:#eeeeee;">1.000000</div>
<div class="t" style="left:23.30px;top:149.44px;font-size:12px;line-height:12px;letter-spacing:-0.111px;color:#eeeeee;">Start Time</div>
<div class="t" style="left:172.60px;top:149.44px;font-size:12px;line-height:12px;letter-spacing:-0.771px;color:#eeeeee;">0.000000</div>
<div class="t" style="left:23.30px;top:167.44px;font-size:12px;line-height:12px;letter-spacing:-0.037px;color:#1e1e1e;">Stop Time</div>
<div class="t" style="left:172.60px;top:167.44px;font-size:12px;line-height:12px;letter-spacing:-0.812px;color:#1e1e1e;">22.100000</div>
<div class="t" style="left:23.30px;top:185.44px;font-size:12px;line-height:12px;letter-spacing:-0.233px;color:#eeeeee;">Manager</div>
<svg style="left:173.5px;top:181px" width="10" height="13"><defs><linearGradient id="lk33010" x1="0" y1="0" x2="1" y2="1"><stop offset="0" stop-color="#8ad4ff"/><stop offset="1" stop-color="#1e74c4"/></linearGradient></defs><path d="M7.5 4 Q3.2 4 2.6 7.5 Q2.4 10.8 7 11" fill="none" stroke="#0a3a70" stroke-width="4.8"/><path d="M7.5 4 Q3.2 4 2.6 7.5 Q2.4 10.8 7 11" fill="none" stroke="url(#lk33010)" stroke-width="3.2"/><path d="M4.5 1.8 L9.8 0.6 L8.8 6.5Z" fill="#7ac8f8" stroke="#0a3a70" stroke-width="0.7"/></svg>
<div class="t" style="left:188.30px;top:185.44px;font-size:12px;line-height:12px;letter-spacing:0.009px;color:#eeeeee;">3 [NiControllerManager]</div>
<div class="t" style="left:23.30px;top:203.44px;font-size:12px;line-height:12px;letter-spacing:-0.014px;color:#eeeeee;">Accum Root Name</div>
<svg style="left:169px;top:202px" width="16" height="10"><text x="0.5" y="8" font-family="Liberation Sans" font-weight="bold" font-size="9.5" letter-spacing="-0.3" fill="#000" stroke="#e8e8e8" stroke-width="1.6" paint-order="stroke" stroke-linejoin="round">Txt</text></svg>
<div class="t" style="left:188.30px;top:203.44px;font-size:12px;line-height:12px;letter-spacing:-0.078px;color:#eeeeee;">OrderedRenderingNode [9]</div>
<div class="t" style="left:23.30px;top:221.44px;font-size:12px;line-height:12px;letter-spacing:0.058px;color:#eeeeee;">Num Anim Note Arrays</div>
<div class="t" style="left:172.60px;top:221.44px;font-size:12px;line-height:12px;color:#eeeeee;">0</div>
</div>
<div class="a" style="left:414px;top:478px;width:1px;height:245px;background:#2c2c2c"></div>
<div class="a" style="left:415px;top:478px;width:13px;height:245px;background:#434343"></div>
<div class="a" style="left:415px;top:491px;width:13px;height:187px;background:#474747;border:1px solid #5e5e5e"></div>
<div class="a" style="left:415px;top:478px;width:13px;height:13px;background:#404040;border:1px solid #606060"></div>
<svg style="left:417px;top:482px" width="9" height="5"><path d="M0 4.5 L4.5 0 L9 4.5Z" fill="#e0e0e0"/></svg>
<div class="a" style="left:415px;top:710px;width:13px;height:13px;background:#404040;border:1px solid #606060"></div>
<svg style="left:417px;top:714px" width="9" height="5"><path d="M0 0.5 L4.5 5 L9 0.5Z" fill="#e0e0e0"/></svg>
<div class="a" style="left:12px;top:724px;width:402px;height:13px;background:#3b3b3b"></div>
<div class="a" style="left:25px;top:724px;width:194px;height:13px;background:#474747;border:1px solid #5e5e5e"></div>
<div class="a" style="left:12px;top:724px;width:13px;height:13px;background:#404040;border:1px solid #606060"></div>
<svg style="left:16px;top:726px" width="5" height="9"><path d="M4.5 0 L0 4.5 L4.5 9Z" fill="#d8d8d8"/></svg>
<div class="a" style="left:401px;top:724px;width:13px;height:13px;background:#404040;border:1px solid #606060"></div>
<svg style="left:405px;top:726px" width="5" height="9"><path d="M0.5 0 L5 4.5 L0.5 9Z" fill="#d8d8d8"/></svg>
<svg style="left:406px;top:434px" width="11" height="11"><rect x="0.5" y="0.5" width="10" height="10" rx="1.5" fill="none" stroke="#a8a8a8"/><rect x="4" y="2.5" width="4.5" height="4.5" fill="none" stroke="#a8a8a8"/><rect x="2.5" y="4.5" width="4" height="4" fill="#3c3c3c" stroke="#a8a8a8"/></svg>
<svg style="left:420px;top:434px" width="11" height="11"><rect x="0.5" y="0.5" width="10" height="10" rx="1.5" fill="none" stroke="#a8a8a8"/><path d="M3 3 L8 8 M8 3 L3 8" stroke="#b0b0b0" stroke-width="2.2"/></svg>
<svg style="left:386px;top:459px" width="12" height="12"><path d="M1.5 1 L6 5 L10.5 1" fill="none" stroke="#5e5e5e" stroke-width="2"/><path d="M1.5 5.5 L6 9.5 L10.5 5.5" fill="none" stroke="#c4c4c4" stroke-width="2"/></svg>
<svg style="left:412px;top:459px" width="12" height="12"><path d="M1.5 6 L6 2 L10.5 6" fill="none" stroke="#c0c0c0" stroke-width="2"/><path d="M1.5 10.5 L6 6.5 L10.5 10.5" fill="none" stroke="#626262" stroke-width="2"/></svg>
</body></html>
